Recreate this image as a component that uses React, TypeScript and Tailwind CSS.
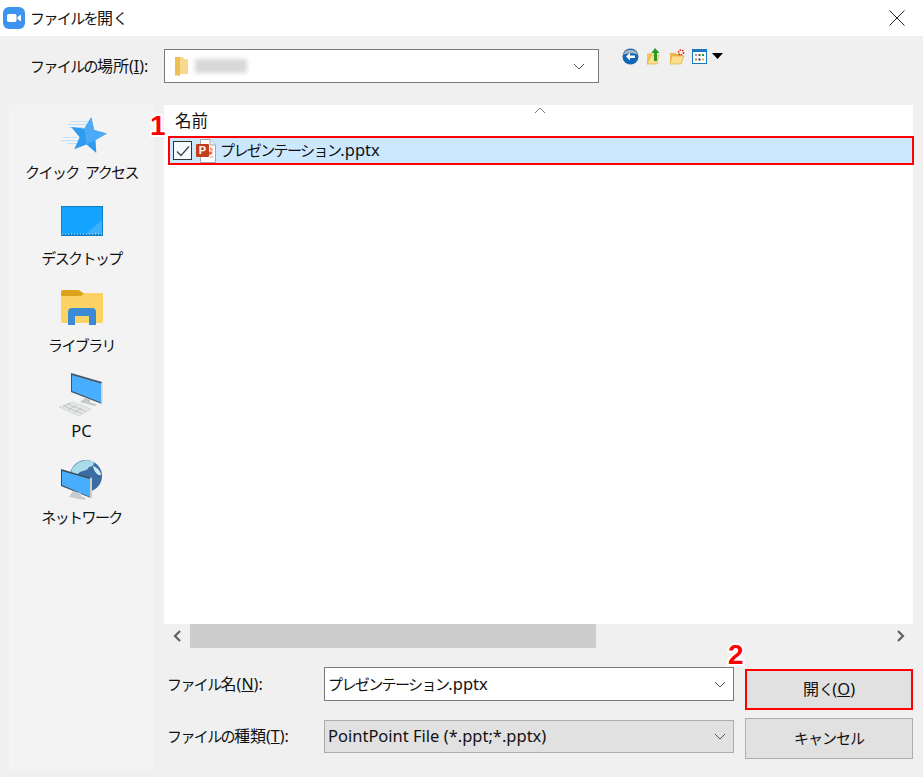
import type { ReactNode } from 'react';

const Chevron = () => (
  <svg width="12" height="7" viewBox="0 0 12 7" fill="none" stroke="#555" strokeWidth="1">
    <path d="M1 1l5 5 5-5" />
  </svg>
);

const ZoomLogo = () => (
  <svg width="22" height="22" viewBox="0 0 22 22">
    <rect width="22" height="22" rx="6" fill="#3d94ee" />
    <rect x="4" y="7" width="9.5" height="8" rx="1.8" fill="#fff" />
    <path d="M14.5 10l3.5-2.6v7.2L14.5 12z" fill="#fff" />
  </svg>
);

const StarIcon = () => (
  <svg width="55" height="45" viewBox="-1 0 55 45" fill="none">
    <g stroke="#bfe0fb" strokeWidth="1">
      <path d="M16 8.500h18M13 11.500h19M14 14.500h14M8 24.500h14M6 27.500h18M12 30.500h14" />
    </g>
    <path d="M36.300 4.300L39.100 17.100 51.800 20.400 40.500 27 41.300 40 31.500 31.400 19.300 36.200 24.600 24.200 16.200 14.100 29.300 15.400z" fill="#2f9bf0" />
    <path d="M36.300 4.300L39.100 17.100 51.800 20.400 40.500 27 31.500 31.400 29.300 15.400z" fill="#4caaf6" />
  </svg>
);

const DesktopIcon = () => (
  <svg width="42" height="30" viewBox="0 0 42 30">
    <rect width="42" height="30" fill="#0f7fc9" />
    <rect x="1" y="1" width="40" height="27" fill="#14a4ff" />
    <path d="M25 28L41 14v14z" fill="#3db0fb" />
    <path d="M1 28h40" stroke="#cfeaff" strokeWidth="1" strokeDasharray="1 2" />
  </svg>
);

const LibraryIcon = () => (
  <svg width="42" height="36" viewBox="0 0 42 36">
    <path d="M0 2a2 2 0 0 1 2-2h16l4 3h18a2 2 0 0 1 2 2v6H0z" fill="#dba31a" />
    <path d="M0 6h20l3-3h17a2 2 0 0 1 2 2v26a2 2 0 0 1-2 2H2a2 2 0 0 1-2-2z" fill="#fdd265" />
    <path d="M7 35V22a4 4 0 0 1 4-4h20a4 4 0 0 1 4 4v13h-7V26H14v9z" fill="#3b8bd4" />
  </svg>
);

const PcIcon = () => (
  <svg width="55" height="50" viewBox="-1 -1 55 50">
    <path d="M16 3l31 9v22l-31-12z" fill="#465360" />
    <path d="M17 5l29 8.500v19L17 21z" fill="#4aaeff" />
    <path d="M46 13l1.500-.5v21l-1.500 1z" fill="#cfcfcf" />
    <path d="M30 28l5 1.500v3l7 2-2 1.500-15-4z" fill="#c4c9c9" />
    <path d="M18 32l18 7-12 7L4 37z" fill="#e4e7e7" stroke="#c0c4c4" strokeWidth=".5" />
    <path d="M13 34l18 7.500M9 36l18 7.500M15 33l-7 4.500M21 35.500l-8 4.500M27 38l-8 4.500" stroke="#b4b9b9" strokeWidth=".7" />
  </svg>
);

const NetworkIcon = () => (
  <svg width="55" height="50" viewBox="-1 0 55 50">
    <circle cx="31" cy="20" r="16" fill="#3b6ca1" />
    <path d="M17 13c5-8 14-10 20-8 4 2 1 6-3 6-2 5-9 3-11 7l-6 2c-1-3-1-4 0-7z" fill="#a9dcea" />
    <path d="M38 10c4 1 8 6 8 9-3 1-7-3-8-9z" fill="#cfeaf2" />
    <path d="M6 13l30 9v20L6 30z" fill="#3c4a55" />
    <path d="M7 15l28 8v18L7 29z" fill="#4aaeff" />
    <path d="M35 22l2-.5v20l-2 1z" fill="#cfcfcf" />
    <path d="M18 35l8 2v3l5 2-2 2-15-3z" fill="#c8cccc" />
  </svg>
);

const PptIcon = () => (
  <svg width="20" height="24" viewBox="0 0 20 24">
    <path d="M4.500.5H14l5.500 5.500v17.500h-15z" fill="#fff" stroke="#a8a8a8" />
    <path d="M14 .5V6h5.500" fill="#eee" stroke="#a8a8a8" />
    <path d="M13 9a3.500 3.500 0 1 0 3.500 3.500H13z" fill="#ed6c47" />
    <path d="M14 8.500v3h3a3 3 0 0 0-3-3z" fill="#ff8f6b" />
    <rect x="13.500" y="17.500" width="4" height="1" fill="#d9a08e" />
    <rect x="0" y="5" width="13" height="13" rx="1" fill="#c43e1c" />
    <text x="6.500" y="15" textAnchor="middle" fontSize="11" fontWeight="700" fill="#fff" fontFamily="Liberation Sans, sans-serif">P</text>
  </svg>
);

const ToolbarIcons = () => (
  <div className="ml-[23px] mt-[-1px] flex items-start">
    <svg width="17" height="17" viewBox="0 0 17 17">
      <circle cx="8.500" cy="8.500" r="8" fill="#1266b3" />
      <path d="M1 7a8 8 0 0 1 15 0c-3-2.500-11-2.500-15 0z" fill="#a9b4bc" />
      <path d="M8 4.500L4 8.500l4 4V10h5V7.500H8z" fill="#fff" />
    </svg>
    <svg className="ml-[7px]" width="16" height="17" viewBox="0 0 16 17">
      <path d="M1 6l5-1.500V15l-5 1.500z" fill="#f4c551" />
      <path d="M5 7h8l-2 9H1z" fill="#fbdf8e" stroke="#d9a63a" strokeWidth=".6" />
      <path d="M9 0l4.500 5H11v8H8V5H5.500z" fill="#2a9a20" />
    </svg>
    <svg className="ml-[7px] mt-px" width="16" height="16" viewBox="0 0 16 16">
      <path d="M1 4h6l1 1h4v9.500H1z" fill="#e9b94a" />
      <path d="M3 7h12l-3 8H1z" fill="#fbdf8e" stroke="#d9a63a" strokeWidth=".6" />
      <circle cx="12" cy="3.500" r="2.500" fill="none" stroke="#e2231a" strokeWidth="1.500" strokeDasharray="1.500 1" />
    </svg>
    <svg className="ml-[7px] mt-px" width="15" height="15" viewBox="0 0 15 15">
      <rect x=".5" y=".5" width="14" height="14" fill="#fff" stroke="#1878c4" />
      <rect x="0" y="0" width="15" height="3" fill="#1878c4" />
      <rect x="3" y="5" width="2" height="2" fill="#999" />
      <rect x="6.500" y="5" width="2" height="2" fill="#555" />
      <rect x="10" y="5" width="2" height="2" fill="#2a9a20" />
      <rect x="3" y="9.500" width="2" height="2" fill="#e8705a" />
      <rect x="6.500" y="9.500" width="2" height="2" fill="#223366" />
      <rect x="10" y="9.500" width="2" height="2" fill="#e5a93c" />
    </svg>
    <svg className="ml-[5px] mt-[5px]" width="11" height="6" viewBox="0 0 11 6">
      <path d="M0 0h11L5.500 6z" fill="#000" />
    </svg>
  </div>
);

// narrow kana, the way Meiryo UI sets them
const Kana = ({ children }: { children: ReactNode }) => (
  <span className="text-[15px] tracking-[-1.6px]">{children}</span>
);

const FileName = () => (
  <span>
    <Kana>プレゼンテーション</Kana>.pptx
  </span>
);

const places: { icon: ReactNode; label: ReactNode }[] = [
  { icon: <StarIcon />, label: <span className="text-[15px] tracking-[-1.6px] [word-spacing:4px]">クイック アクセス</span> },
  { icon: <DesktopIcon />, label: <Kana>デスクトップ</Kana> },
  { icon: <LibraryIcon />, label: <Kana>ライブラリ</Kana> },
  { icon: <PcIcon />, label: 'PC' },
  { icon: <NetworkIcon />, label: <Kana>ネットワーク</Kana> },
];

const App = () => {
  return (
    <div className="relative flex h-[777px] w-[923px] flex-col overflow-hidden bg-[#f0f0f0] font-['Noto_Sans','Noto_Sans_CJK_JP',sans-serif] text-[16.5px] text-[#111]">
      {/* Title bar */}
      <div className="flex h-9 shrink-0 items-center bg-white pl-[3px]">
        <ZoomLogo />
        <span className="ml-[5px] flex items-center">
          <Kana>ファイルを</Kana>
          <span className="text-[16px]">開</span>
          <Kana>く</Kana>
        </span>
        <svg className="ml-auto mr-[18px]" width="16" height="16" viewBox="0 0 16 16" stroke="#222" strokeWidth="1">
          <path d="M.5.5l15 15M15.500.5l-15 15" />
        </svg>
      </div>

      {/* Location row */}
      <div className="flex pl-[30px] pt-[13px]">
        <label className="flex h-[34px] w-[134px] items-center">
          <Kana>ファイルの</Kana>
          <span className="text-[16px]">場所</span>
          <span className="text-[16px]">
            (<span className="underline">I</span>):
          </span>
        </label>
        <div className="flex h-[34px] w-[435px] items-center border border-[#7a7a7a] bg-white pl-[9px] pr-[13px]">
          <svg width="15" height="21" viewBox="0 0 15 21">
            <path d="M1 1h8l1 2h4v15H5l-4 2z" fill="#f6d98c" />
            <path d="M1 1h5v19l-5-1z" fill="#eebf54" />
          </svg>
          <div className="ml-[6px] h-[14px] w-[52px] bg-[#d8d8d8] blur-[2px]" />
          <span className="ml-auto">
            <Chevron />
          </span>
        </div>
        <ToolbarIcons />
      </div>

      {/* Main */}
      <div className="mt-[22px] flex flex-1 pl-[9px]">
        <aside className="mb-[7px] w-[145px] bg-[#f3f3f3] pt-[8px]">
          {places.map((place, i) => (
            <div key={i} className="flex h-[86.4px] flex-col items-center">
              <div className="flex h-[44px] items-center justify-center">{place.icon}</div>
              <div className="mt-[3px] flex h-[24px] items-center">{place.label}</div>
            </div>
          ))}
        </aside>

        <div className="ml-[10px] flex w-[749px] flex-col">
          {/* File list */}
          <div className="relative h-[519px] bg-white pt-[3px]">
            <svg className="absolute left-[370px] top-[2px]" width="12" height="7" viewBox="0 0 12 7" fill="none" stroke="#777">
              <path d="M1 6l5-5 5 5" />
            </svg>
            <div className="flex h-[27px] items-center pl-[11px]">名前</div>
            <div className="ml-[4px] mt-px flex h-[29px] w-[746px] items-center border-2 border-[#ff0000] bg-[#cce8ff] pl-[3px]">
              <div className="flex h-[19px] w-[19px] items-center justify-center border border-[#333] bg-[#f4fbff]">
                <svg width="14" height="12" viewBox="0 0 14 12" fill="none" stroke="#444" strokeWidth="1.300">
                  <path d="M1 6.500l4 4L13 1.500" />
                </svg>
              </div>
              <span className="ml-[4px]">
                <PptIcon />
              </span>
              <span className="ml-[4px]">
                <FileName />
              </span>
            </div>
          </div>

          {/* Horizontal scrollbar */}
          <div className="flex h-[24px] items-center">
            <div className="flex w-[26px] justify-center">
              <svg width="9" height="12" viewBox="0 0 9 12" fill="none" stroke="#606060" strokeWidth="2.200">
                <path d="M7 1L2 6l5 5" />
              </svg>
            </div>
            <div className="h-full w-[406px] bg-[#cdcdcd]" />
            <div className="ml-auto flex w-[26px] justify-center">
              <svg width="9" height="12" viewBox="0 0 9 12" fill="none" stroke="#606060" strokeWidth="2.200">
                <path d="M2 1l5 5-5 5" />
              </svg>
            </div>
          </div>

          {/* Name, type and buttons */}
          <div className="flex">
            <div className="flex w-[570px] flex-col gap-[19px] pt-[19px]">
              <div className="flex items-center">
                <label className="w-[160px] pl-[3px]">
                  <Kana>ファイル</Kana>
                  <span className="text-[16px]">
                    名(<span className="underline">N</span>):
                  </span>
                </label>
                <div className="flex h-[34px] w-[410px] items-center border border-[#7a7a7a] bg-white pl-[3px] pr-[7px]">
                  <FileName />
                  <span className="ml-auto">
                    <Chevron />
                  </span>
                </div>
              </div>
              <div className="flex items-center">
                <label className="w-[160px] pl-[3px]">
                  <Kana>ファイルの</Kana>
                  <span className="text-[16px]">
                    種類(<span className="underline">T</span>):
                  </span>
                </label>
                <div className="flex h-[33px] w-[410px] items-center border border-[#adadad] bg-[#e1e1e1] pl-[3px] pr-[7px]">
                  <span>PointPoint File (*.ppt;*.pptx)</span>
                  <span className="ml-auto">
                    <Chevron />
                  </span>
                </div>
              </div>
            </div>
            <div className="ml-[11px] flex w-[168px] flex-col gap-[8px] pt-[21px]">
              <button className="h-[41px] border-2 border-[#ff0000] bg-[#e1e1e1]">
                <span className="text-[16px]">開</span>
                <Kana>く</Kana>(<span className="underline">O</span>)
              </button>
              <button className="h-[41px] border border-[#adadad] bg-[#e1e1e1] text-[15px] tracking-[-1px]">キャンセル</button>
            </div>
          </div>
        </div>
      </div>

      {/* Step numbers */}
      <span className="absolute left-[150px] top-[110px] font-['Liberation_Sans',sans-serif] text-[28px] font-bold leading-[32px] text-[#ff0000] [-webkit-text-stroke:4px_white] [paint-order:stroke_fill]">
        1
      </span>
      <span className="absolute left-[728px] top-[639px] font-['Liberation_Sans',sans-serif] text-[28px] font-bold leading-[32px] text-[#ff0000] [-webkit-text-stroke:4px_white] [paint-order:stroke_fill]">
        2
      </span>
    </div>
  );
};

export default App;
